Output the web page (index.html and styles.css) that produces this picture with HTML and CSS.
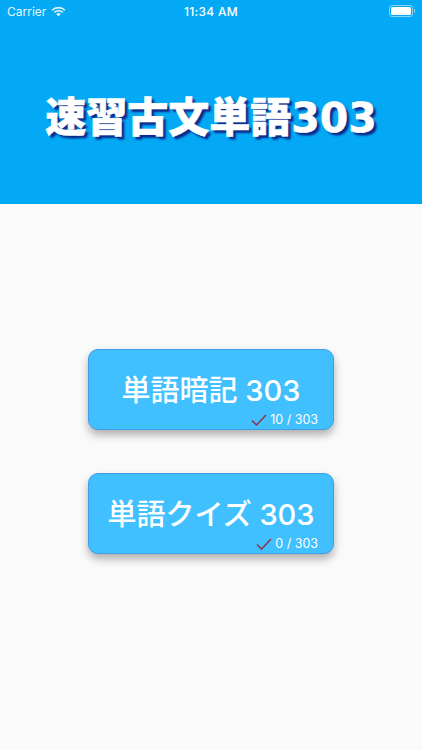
FILE: index.html
```html
<!DOCTYPE html>
<html lang="ja">
<head>
    <meta charset="UTF-8">
    <meta name="viewport" content="width=device-width, initial-scale=1.0">
    <title>速習古文単語303</title>
    <link rel="stylesheet" href="styles.css">
</head>
<body>
    <header class="header">
        <div class="status-bar">
            <div class="status-left">
                <span>Carrier</span>
                <svg class="wifi" viewBox="0 0 16 12" width="15" height="11">
                    <path d="M8 11.5 5.6 8.8a3.4 3.4 0 0 1 4.8 0Z" fill="#fff"/>
                    <path d="M1 4.6a10 10 0 0 1 14 0M3.4 7a6.6 6.6 0 0 1 9.2 0" fill="none" stroke="#fff" stroke-width="1.8"/>
                </svg>
            </div>
            <div class="status-time">11:34 AM</div>
            <div class="status-right">
                <div class="battery"><div class="battery-level"></div></div>
                <div class="battery-cap"></div>
            </div>
        </div>
        <h1 class="title">速習古文単語303</h1>
    </header>

    <main class="menu">
        <a class="menu-button">
            <span class="menu-label">単語暗記 303</span>
            <span class="menu-progress">
                <svg class="check" viewBox="0 0 16 12" width="16" height="12">
                    <path d="M1 6.5 5.5 11 15 1" fill="none" stroke="#8b3a4e" stroke-width="1.6"/>
                </svg>
                10 / 303
            </span>
        </a>
        <a class="menu-button">
            <span class="menu-label">単語クイズ 303</span>
            <span class="menu-progress">
                <svg class="check" viewBox="0 0 16 12" width="16" height="12">
                    <path d="M1 6.5 5.5 11 15 1" fill="none" stroke="#8b3a4e" stroke-width="1.6"/>
                </svg>
                0 / 303
            </span>
        </a>
    </main>
</body>
</html>
```

FILE: styles.css
```css
html, body {
    height: 100%;
}

body {
    margin: 0;
    background-color: #fafafa;
    font-family: "Inter", "Noto Sans CJK JP", sans-serif;
    color: #fff;
    overflow: hidden;
}

.header {
    height: 204px;
    background-color: #03a9f4;
    display: flex;
    flex-direction: column;
}

.status-bar {
    height: 22px;
    padding: 0 7px;
    display: grid;
    grid-template-columns: 1fr auto 1fr;
    align-items: center;
    font-size: 12px;
}

.status-left {
    display: flex;
    align-items: center;
    gap: 5px;
    opacity: 0.9;
}

.status-time {
    font-weight: 500;
    letter-spacing: 0.3px;
}

.status-right {
    display: flex;
    justify-content: flex-end;
    align-items: center;
}

.battery {
    width: 20px;
    height: 8px;
    padding: 1px;
    border: 1px solid rgba(255, 255, 255, 0.5);
    border-radius: 3px;
}

.battery-level {
    height: 100%;
    background-color: #fff;
    border-radius: 1.5px;
}

.battery-cap {
    width: 1px;
    height: 4px;
    margin-left: 1px;
    background-color: rgba(255, 255, 255, 0.5);
}

.title {
    margin: 71px 0 0 0;
    text-align: center;
    font-family: "DejaVu Sans", "Noto Sans CJK JP", sans-serif;
    font-size: 41px;
    line-height: 50px;
    font-weight: 900;
    white-space: nowrap;
    -webkit-text-stroke: 0.6px #fff;
    text-shadow: 3px 3px 2px #0d2a8c;
}

.menu {
    display: flex;
    flex-direction: column;
    align-items: center;
    gap: 43px;
    padding-top: 145px;
}

.menu-button {
    box-sizing: border-box;
    width: 246px;
    height: 81px;
    padding-top: 2px;
    position: relative;
    display: flex;
    justify-content: center;
    align-items: center;
    background-color: #40c0ff;
    border: 1px solid #3f9cea;
    border-radius: 10px;
    box-shadow: 0 5px 8px rgba(0, 0, 0, 0.3);
}

.menu-label {
    font-size: 29px;
    line-height: 36px;
    font-weight: 500;
    white-space: nowrap;
}

.menu-progress {
    position: absolute;
    right: 15px;
    bottom: 0;
    display: flex;
    align-items: center;
    gap: 3px;
    font-size: 12.5px;
    line-height: 18px;
}
```
